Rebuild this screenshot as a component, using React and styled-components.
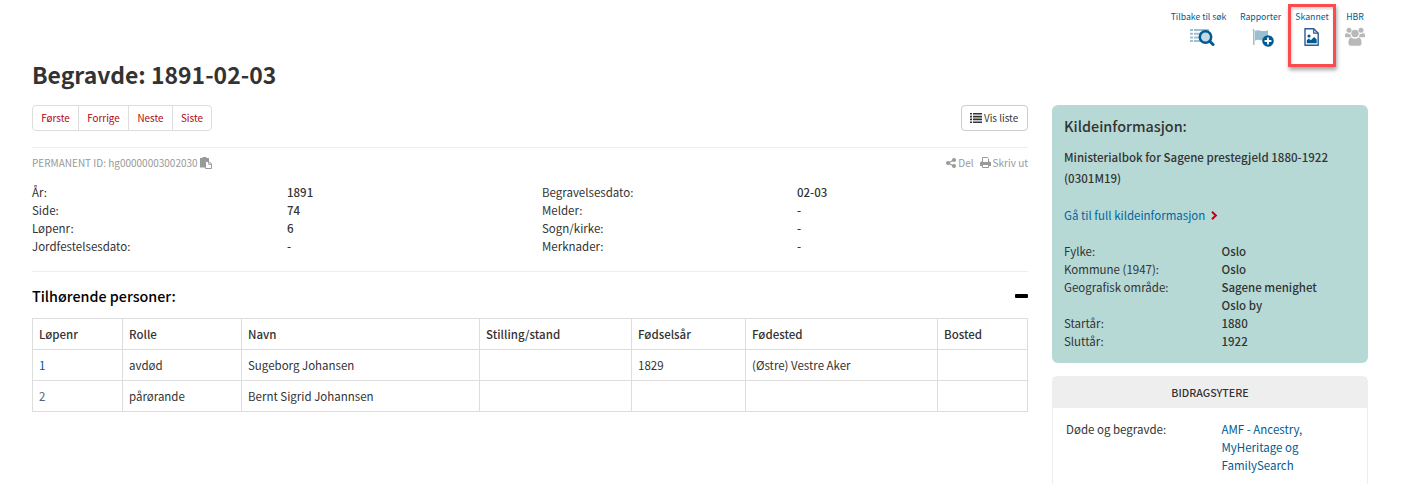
import React from 'react'
import styled, { createGlobalStyle } from 'styled-components'

const GlobalStyle = createGlobalStyle`
    * {
        box-sizing: border-box;
    }
    body {
        margin: 0;
        background: #fff;
        color: #333;
        font-family: "Noto Sans CJK SC", "Noto Sans", sans-serif;
        font-size: 11.5px;
        line-height: 18px;
        overflow: hidden;
    }
    a {
        color: #005b91;
        text-decoration: none;
    }
`

const Page = styled.div`
    width: 1420px;
    height: 484px;
    padding: 0 52px 0 32px;
    overflow: hidden;
`

const Toolbar = styled.nav`
    display: flex;
    justify-content: flex-end;
    height: 56px;
    padding: 9px 4px 0 0;
`

const Tool = styled.a`
    position: relative;
    display: flex;
    flex-direction: column;
    align-items: center;
    width: ${(props) => props.$width}px;
    margin-left: ${(props) => props.$gap || 14}px;
    font-size: 8.7px;
    line-height: 16px;
    white-space: nowrap;
    svg {
        display: block;
        flex-shrink: 0;
        margin-top: 2px;
        margin-left: ${(props) => props.$shift || 0}px;
    }
`

const Marker = styled.span`
    position: absolute;
    top: -5px;
    left: -7px;
    width: 48px;
    height: 63px;
    border: 3px solid #fa4b4f;
    box-shadow: 1px 3px 4px rgba(0, 0, 0, 0.35), inset 1px 2px 3px rgba(0, 0, 0, 0.18);
`

const Title = styled.h1`
    height: 49px;
    margin: 0;
    font-size: 22.95px;
    font-weight: 700;
    line-height: 37px;
`

const Columns = styled.div`
    display: flex;
    gap: 24px;
`

const Main = styled.main`
    width: 996px;
`

const Sidebar = styled.aside`
    width: 316px;
`

const ButtonRow = styled.div`
    display: flex;
    justify-content: space-between;
    height: 42px;
`

const ButtonGroup = styled.div`
    display: flex;
    height: 26px;
    border: 1px solid #ddd;
    border-radius: 4px;
`

const PagerLink = styled.a`
    width: ${(props) => props.$width}px;
    color: #b5000d;
    font-size: 9.85px;
    line-height: 25px;
    text-align: center;
    & + & {
        border-left: 1px solid #ddd;
    }
`

const ListButton = styled.button`
    display: flex;
    align-items: center;
    gap: 2px;
    width: 67px;
    height: 26px;
    padding: 0 0 0 8px;
    border: 1px solid #ccc;
    border-radius: 4px;
    background: #fff;
    color: #333;
    font: inherit;
    font-size: 9.85px;
    white-space: nowrap;
`

const MetaRow = styled.div`
    display: flex;
    justify-content: space-between;
    height: 36px;
    padding-top: 5px;
    border-top: 1px solid #eee;
    color: #999;
    font-size: 10px;
    line-height: 19px;
`

const MetaItem = styled.span`
    display: flex;
    align-items: center;
    gap: ${(props) => props.$gap}px;
    height: 19px;
    white-space: nowrap;
`

const MetaActions = styled.div`
    display: flex;
    gap: 6px;
`

const Details = styled.div`
    display: grid;
    grid-template-columns: 510px 1fr;
    height: 89px;
    border-bottom: 1px solid #eee;
`

const Facts = styled.dl`
    display: grid;
    grid-template-columns: ${(props) => props.$label}px 1fr;
    align-content: start;
    margin: 0;
`

const Label = styled.dt`
    white-space: nowrap;
`

const Value = styled.dd`
    margin: 0;
    font-weight: 500;
`

const SectionHead = styled.div`
    display: flex;
    justify-content: space-between;
    align-items: center;
    height: 46px;
    padding-top: 2px;
`

const SectionTitle = styled.h2`
    margin: 0;
    color: #000;
    font-size: 14.3px;
    font-weight: 500;
`

const Collapse = styled.span`
    width: 13px;
    height: 4px;
    margin-bottom: 1px;
    border-radius: 1px;
    background: #000;
`

const PersonTable = styled.table`
    width: 996px;
    border-collapse: collapse;
    table-layout: fixed;
    th,
    td {
        height: 31px;
        padding: 0 6px;
        border: 1px solid #ddd;
        text-align: left;
        white-space: nowrap;
    }
    th {
        font-weight: 500;
    }
`

const PersonLink = styled.a`
    color: ${(props) => (props.$visited ? '#5d5f78' : '#005b91')};
`

const SourceBox = styled.section`
    height: 258px;
    padding: 10px 12px;
    border-radius: 6px;
    background: #b6d9d6;
`

const SourceTitle = styled.h3`
    margin: 0 0 10px;
    font-size: 14.4px;
    font-weight: 500;
    line-height: 22px;
`

const SourceName = styled.p`
    margin: 0;
    height: 59px;
    font-size: 11.54px;
    font-weight: 500;
    line-height: 21px;
`

const SourceLink = styled.a`
    display: flex;
    align-items: center;
    gap: 6px;
    height: 18px;
    margin-bottom: 18px;
    color: #00659f;
`

const Contributors = styled.section`
    height: 150px;
    margin-top: 13px;
    border: 1px solid #eee;
    border-radius: 6px 6px 0 0;
`

const ContributorsTitle = styled.h3`
    height: 31px;
    margin: 0 0 12px;
    background: #eee;
    font-size: 10.7px;
    font-weight: 500;
    line-height: 32px;
    text-align: center;
`

const ContributorRow = styled.div`
    display: grid;
    grid-template-columns: 155.5px 100px;
    padding-left: 13px;
`

const SearchListIcon = () => (
    <svg width="25" height="20" viewBox="0 0 25 20">
        <path d="M0 2h3v2H0zM4 2h15v2H4zM0 5.700h3v2H0zM4 5.700h9v2H4zM0 9.400h3v2H0zM4 9.400h9v2H4zM0 13h3v2H0zM4 13h11v2H4z" fill="#a0c0d2" />
        <circle cx="15.500" cy="10" r="5.700" fill="#c3d9e5" stroke="#005b91" strokeWidth="2.500" />
        <path d="M20 14.500l3 3" stroke="#005b91" strokeWidth="3" strokeLinecap="round" />
    </svg>
)

const FlagIcon = () => (
    <svg width="22" height="20" viewBox="0 0 22 20">
        <path d="M.5 2.700a1.200 1.200 0 0 1 2 0V18H1V4.500zM3 4c4-2.500 7 1.800 13-.8v9.600c-5 2.600-8.600-1.600-13 .9z" fill="#9abdd0" />
        <circle cx="16" cy="14" r="5.800" fill="#005b91" />
        <path d="M16 10.600v6.800M12.600 14h6.800" stroke="#fff" strokeWidth="1.800" />
    </svg>
)

const PictureFileIcon = () => (
    <svg width="16" height="20" viewBox="0 0 16 20">
        <path d="M1 1.700h8.700l4.500 4.500v12H1z" fill="#fff" stroke="#2b5a94" strokeWidth="1.400" strokeLinejoin="round" />
        <path d="M9.700 1.700v4.500h4.500" fill="none" stroke="#2b5a94" strokeWidth="1.200" />
        <circle cx="5" cy="9" r="1.600" fill="#005b91" />
        <path d="M2.800 16.200v-3l2-1.700 2 1.700 3.300-3.300 2.600 2.600v3.700z" fill="#005b91" />
    </svg>
)

const PeopleIcon = () => (
    <svg width="20" height="20" viewBox="0 0 20 20" fill="#b8b8b8">
        <circle cx="4" cy="3.200" r="2.500" />
        <circle cx="16" cy="3.200" r="2.500" />
        <path d="M0 10V8.500Q0 6 1.800 6q1.800 1.300 3.600.7-.2 2 1 3.600H1.500Q0 10.500 0 10zM20 10V8.500Q20 6 18.200 6q-1.800 1.300-3.600.7.200 2-1 3.600h4.900q1.500.2 1.500-.3z" />
        <circle cx="10" cy="6.500" r="3.700" />
        <path d="M3.400 16.500c0-3.500.8-5.700 3-6q3.600 2.600 7.200 0c2.200.3 3 2.500 3 6q0 2.300-2.500 2.300H5.900q-2.500 0-2.500-2.300z" />
    </svg>
)

const ListIcon = () => (
    <svg width="12" height="10" viewBox="0 0 12 10" fill="#333">
        <path d="M0 0h2v1.600H0zM3 0h9v1.600H3zM0 2.800h2v1.600H0zM3 2.800h9v1.600H3zM0 5.600h2v1.600H0zM3 5.600h9v1.600H3zM0 8.400h2V10H0zM3 8.400h9V10H3z" />
    </svg>
)

const CopyIcon = () => (
    <svg width="12" height="12" viewBox="0 0 12 12">
        <path d="M0 1h2.500V0h4v1H9v3H5v6.500H0z" fill="#999" />
        <path d="M5.500 4.500H9L11.500 7v4.500h-6z" fill="#fff" stroke="#999" />
        <path d="M8.700 4.500v2.800h2.800" fill="none" stroke="#999" />
    </svg>
)

const ShareIcon = () => (
    <svg width="10" height="10" viewBox="0 0 10 10" fill="#999">
        <path d="M8 2L2 5l6 3" fill="none" stroke="#999" strokeWidth="1.300" />
        <circle cx="8" cy="2" r="2" />
        <circle cx="2" cy="5" r="2" />
        <circle cx="8" cy="8" r="2" />
    </svg>
)

const PrintIcon = () => (
    <svg width="11" height="11" viewBox="0 0 11 11">
        <path d="M0 9V6q0-1.500 1.500-1.500h8Q11 4.500 11 6v3z" fill="#999" />
        <path d="M2.500 5.500v-5h4.700l1.300 1.300v3.700z" fill="#fff" stroke="#999" />
        <path d="M2.500 7.500h6v3h-6z" fill="#fff" stroke="#999" />
    </svg>
)

const ChevronIcon = () => (
    <svg width="7" height="9" viewBox="0 0 7 9">
        <path d="M1 .8l3.800 3.700L1 8.200" fill="none" stroke="#c60012" strokeWidth="2.100" />
    </svg>
)

const pager = [
    ['Første', 45],
    ['Forrige', 50],
    ['Neste', 44],
    ['Siste', 39],
]

const leftFacts = [
    ['År:', '1891'],
    ['Side:', '74'],
    ['Løpenr:', '6'],
    ['Jordfestelsesdato:', '-'],
]

const rightFacts = [
    ['Begravelsesdato:', '02-03'],
    ['Melder:', '-'],
    ['Sogn/kirke:', '-'],
    ['Merknader:', '-'],
]

const sourceFacts = [
    ['Fylke:', 'Oslo'],
    ['Kommune (1947):', 'Oslo'],
    ['Geografisk område:', 'Sagene menighet'],
    ['', 'Oslo by'],
    ['Startår:', '1880'],
    ['Sluttår:', '1922'],
]

const tableColumns = [
    ['Løpenr', 90],
    ['Rolle', 119],
    ['Navn', 238],
    ['Stilling/stand', 152],
    ['Fødselsår', 114],
    ['Fødested', 192],
    ['Bosted', 90],
]

const persons = [
    ['1', 'avdød', 'Sugeborg Johansen', '', '1829', '(Østre) Vestre Aker', ''],
    ['2', 'pårørande', 'Bernt Sigrid Johannsen', '', '', '', ''],
]

function FactList({ items, label }) {
    return (
        <Facts $label={label}>
            {items.map(([name, value]) => (
                <React.Fragment key={name}>
                    <Label>{name}</Label>
                    <Value>{value}</Value>
                </React.Fragment>
            ))}
        </Facts>
    )
}

export default function App() {
    return (
        <>
            <GlobalStyle />
            <Page>
                <Toolbar>
                    <Tool $width={55} $shift={7}>Tilbake til søk<SearchListIcon /></Tool>
                    <Tool $width={41} $shift={5}>Rapporter<FlagIcon /></Tool>
                    <Tool $width={34} $shift={-1}>
                        Skannet
                        <PictureFileIcon />
                        <Marker />
                    </Tool>
                    <Tool $width={18} $gap={17}>HBR<PeopleIcon /></Tool>
                </Toolbar>
                <Title>Begravde: 1891-02-03</Title>
                <Columns>
                    <Main>
                        <ButtonRow>
                            <ButtonGroup>
                                {pager.map(([text, width]) => (
                                    <PagerLink key={text} $width={width}>{text}</PagerLink>
                                ))}
                            </ButtonGroup>
                            <ListButton><ListIcon />Vis liste</ListButton>
                        </ButtonRow>
                        <MetaRow>
                            <MetaItem $gap={2}>PERMANENT ID: hg00000003002030<CopyIcon /></MetaItem>
                            <MetaActions>
                                <MetaItem $gap={2}><ShareIcon />Del</MetaItem>
                                <MetaItem $gap={2}><PrintIcon />Skriv ut</MetaItem>
                            </MetaActions>
                        </MetaRow>
                        <Details>
                            <FactList items={leftFacts} label={255} />
                            <FactList items={rightFacts} label={255} />
                        </Details>
                        <SectionHead>
                            <SectionTitle>Tilhørende personer:</SectionTitle>
                            <Collapse />
                        </SectionHead>
                        <PersonTable>
                            <colgroup>
                                {tableColumns.map(([name, width]) => (
                                    <col key={name} width={width} />
                                ))}
                            </colgroup>
                            <thead>
                                <tr>
                                    {tableColumns.map(([name]) => <th key={name}>{name}</th>)}
                                </tr>
                            </thead>
                            <tbody>
                                {persons.map(([nr, ...cells]) => (
                                    <tr key={nr}>
                                        <td><PersonLink $visited={nr === '2'}>{nr}</PersonLink></td>
                                        {cells.map((cell, i) => <td key={i}>{cell}</td>)}
                                    </tr>
                                ))}
                            </tbody>
                        </PersonTable>
                    </Main>
                    <Sidebar>
                        <SourceBox>
                            <SourceTitle>Kildeinformasjon:</SourceTitle>
                            <SourceName>Ministerialbok for Sagene prestegjeld 1880-1922 (0301M19)</SourceName>
                            <SourceLink>Gå til full kildeinformasjon<ChevronIcon /></SourceLink>
                            <FactList items={sourceFacts} label={157.5} />
                        </SourceBox>
                        <Contributors>
                            <ContributorsTitle>BIDRAGSYTERE</ContributorsTitle>
                            <ContributorRow>
                                <span>Døde og begravde:</span>
                                <a>AMF - Ancestry, MyHeritage og FamilySearch</a>
                            </ContributorRow>
                        </Contributors>
                    </Sidebar>
                </Columns>
            </Page>
        </>
    )
}
